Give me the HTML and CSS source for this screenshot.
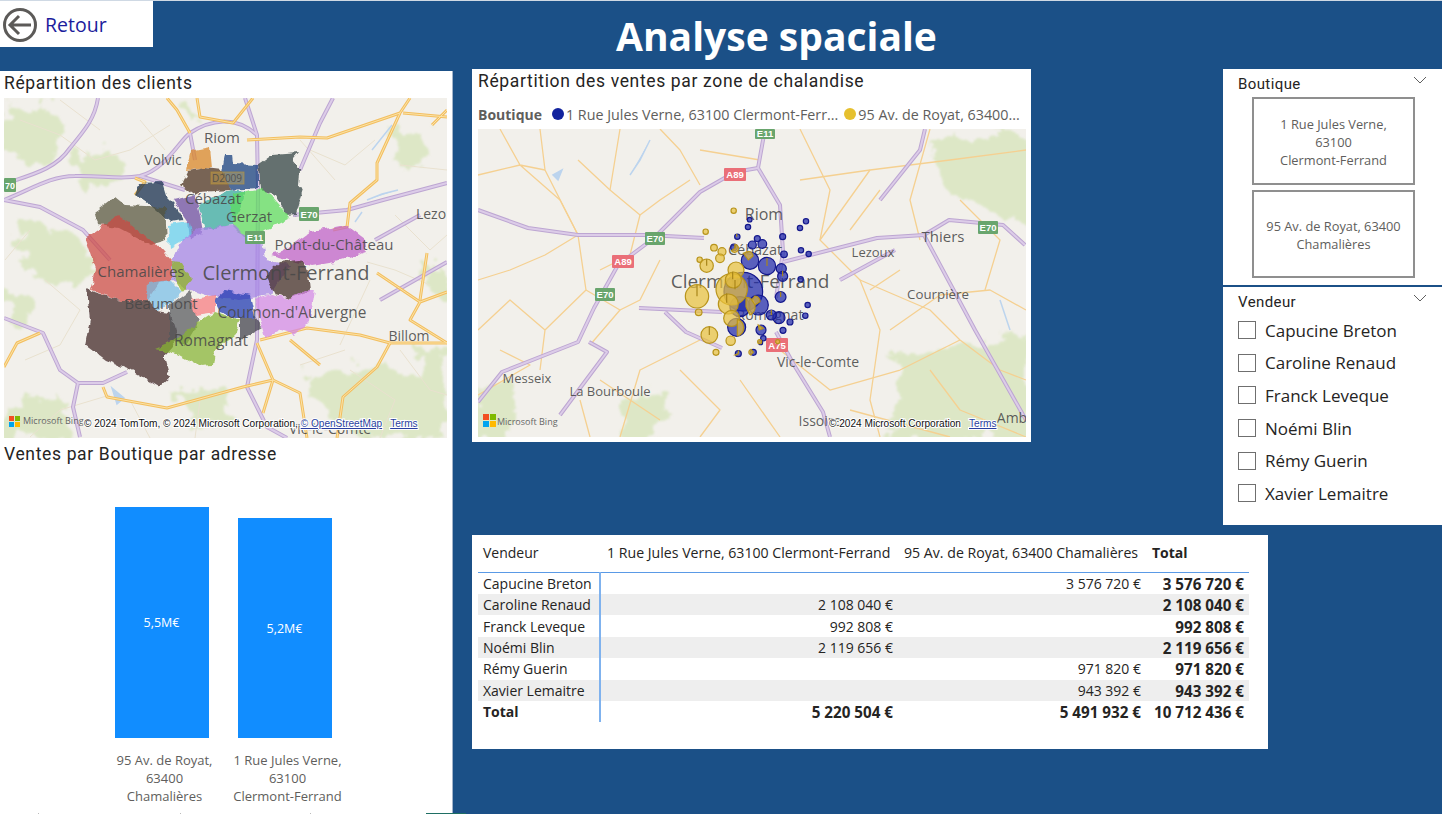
FILE: index.html
```html
<!DOCTYPE html>
<html lang="fr">
<head>
<meta charset="utf-8">
<title>Analyse spaciale</title>
<link rel="stylesheet" href="styles.css">
</head>
<body>
<header class="top">
  <a class="back">
    <svg class="back-ico" viewBox="0 0 34 34"><circle cx="17" cy="17" r="15.5"/><path d="M7 17H28M16 8L7 17L16 26"/></svg>
    <span>Retour</span>
  </a>
  <h1 class="title">Analyse spaciale</h1>
</header>
<main class="main">
  <section class="col-left">
    <h2 class="vis-title">Répartition des clients</h2>
    <svg class="map map-a" viewBox="4 98 443 340">
      <defs>
        <filter id="rough" x="-5%" y="-5%" width="110%" height="110%"><feTurbulence type="fractalNoise" baseFrequency=".11" numOctaves="2" seed="4"/><feDisplacementMap in="SourceGraphic" scale="7" xChannelSelector="R" yChannelSelector="G"/></filter>
        <filter id="woods" x="-5%" y="-5%" width="110%" height="110%"><feTurbulence type="fractalNoise" baseFrequency=".05" numOctaves="4" seed="9"/><feDisplacementMap in="SourceGraphic" scale="34" xChannelSelector="R" yChannelSelector="G"/><feGaussianBlur stdDeviation="1.2"/></filter>
        <g id="a-pur">
          <path d="M4 184C30 175 55 170 70 148C85 130 95 118 98 98"/>
          <path d="M4 200C30 190 50 176 75 176C100 175 120 180 140 176C165 170 180 140 190 133C210 120 235 115 257 135"/>
          <path d="M245 98L257 135L258 190L257 340L247 387L267 427L287 438"/>
          <path d="M293 215L347 210L383 200L447 183"/>
          <path d="M300 170L320 123L333 98"/>
          <path d="M4 200L40 207L83 230L110 260"/>
          <path d="M4 318L43 333L60 370L78 383L103 383L127 372"/>
          <path d="M78 383L73 407L80 437"/>
          <path d="M190 133L195 160M140 176L185 190M380 300L447 262M375 240L420 215"/>
        </g>
        <g id="a-yel">
          <path d="M167 98L177 110L190 133M197 98L200 117L233 123L253 98"/>
          <path d="M247 140L300 137L327 138L400 113L410 98M403 113L447 117"/>
          <path d="M400 113L377 163L377 180L350 203L347 227L333 230"/>
          <path d="M377 273L420 302L410 320L447 343M420 302L447 292M427 253L420 300"/>
          <path d="M260 340L307 328L360 335L390 343L447 343"/>
          <path d="M390 343L377 367L343 397L337 438"/>
          <path d="M103 387L107 397L167 408L243 387L273 380L300 393L307 438"/>
          <path d="M4 367L17 343L40 333M257 343L273 380L263 413"/>
          <path d="M447 110L432 125M290 340L320 365M135 195L145 182L135 178"/>
        </g>
        <g id="a-min">
          <path d="M20 120L60 135L95 160L130 150L170 125M30 230L5 260M45 280L80 310L60 345L25 360M110 395L60 410L30 437"/>
          <path d="M310 150L345 165L375 140M335 180L300 140M400 165L447 170M395 215L430 250L447 235M370 280L340 345M400 350L430 390L447 395M350 370L395 400L380 438"/>
          <path d="M140 120L165 150M100 130L60 100M430 285L395 270L367 262M300 365L345 350M200 400L195 438M130 400L150 438"/>
        </g>
      </defs>
      <rect x="4" y="98" width="443" height="340" class="land"/>
      <g class="soft">
        <path class="wood" filter="url(#woods)" d="M4 105L45 100L65 125L45 165L4 155ZM80 150L115 145L125 180L90 192L76 175ZM18 218L80 238L98 272L72 292L20 268ZM305 375L370 362L447 382V438H345L322 410ZM385 122L424 128L432 160L398 165ZM4 405L60 395L75 437H4ZM178 392L228 385L236 420L190 425ZM416 342L447 356V395L422 380ZM180 105L205 112L195 125ZM420 260L447 270V300L428 290ZM4 290L36 300L30 330L4 325Z"/>
        <use href="#a-min" class="r-min"/>
        <path class="water" d="M367 200L382 194L398 190M355 222L362 212M372 150L392 125M112 388L124 398L117 404Z"/>
        <use href="#a-pur" class="r-pur-o"/><use href="#a-pur" class="r-pur-i"/>
        <use href="#a-yel" class="r-yel-o"/><use href="#a-yel" class="r-yel-i"/>
      </g>
      <g class="zones" filter="url(#rough)">
        <path fill="#d98420" d="M186 171L190 152L210 148L212 168L198 169Z"/>
        <path fill="#123a7c" d="M225 155L232 155L233 164L258 165L258 188L230 190L222 172Z"/>
        <path fill="#2e3e3e" d="M258 165L272 155L298 153L292 160L300 170L299 187L303 188L295 215L287 216L275 195L260 190Z"/>
        <path fill="#4a2d1f" d="M181 185L188 171L205 168L222 170L230 190L200 192L195 195Z"/>
        <path fill="#0b2a4a" d="M135 195L140 183L163 182L168 198L175 205L184 220L170 222L150 205Z"/>
        <path fill="#6a49a0" d="M173 200L195 195L200 215L203 232L190 240L188 222Z"/>
        <path fill="#35a89e" d="M198 205L230 190L245 192L232 225L205 230Z"/>
        <path fill="#5bdc5c" d="M232 195L262 189L270 195L290 218L270 228L245 238L232 225Z"/>
        <path fill="#55533c" d="M95 212L115 197L125 205L165 207L167 240L150 245L118 228L98 225Z"/>
        <path fill="#cc4a42" d="M85 238L118 215L155 243L172 262L172 280L160 282L148 300L120 300L90 290L96 270Z"/>
        <path fill="#63d0f0" d="M168 225L190 222L192 235L170 248Z"/>
        <path fill="#a482e6" d="M182 240L200 228L235 225L250 240L262 240L265 260L290 265L270 295L240 300L205 295L190 290L172 280L172 262Z"/>
        <path fill="#bf5ec8" d="M282 252L310 232L345 225L365 240L367 252L335 262L312 266L270 255Z"/>
        <path fill="#3e2a22" d="M265 275L280 262L300 260L308 272L310 292L290 299L275 295Z"/>
        <path fill="#d488e6" d="M255 300L270 295L290 299L305 290L315 290L310 320L295 335L280 330L265 338L260 320Z"/>
        <path fill="#8db420" d="M172 262L182 263L192 280L182 292L175 280Z"/>
        <path fill="#78bee6" d="M148 283L170 280L182 292L170 305L155 310L147 298Z"/>
        <path fill="#3e2426" d="M87 290L120 300L148 300L155 310L170 312L178 340L165 355L165 360L170 378L160 387L130 370L105 360L85 345L90 320Z"/>
        <path fill="#55585c" d="M170 305L190 290L195 315L200 320L185 345L170 340Z"/>
        <path fill="#f77a80" d="M190 300L215 295L215 312L195 315Z"/>
        <path fill="#1c38b0" d="M214 300L225 290L250 295L255 318L235 318L220 312Z"/>
        <path fill="#3e3e48" d="M240 318L255 318L262 328L250 335L240 340Z"/>
        <path fill="#86b430" d="M155 348L175 340L200 322L215 312L240 320L235 335L215 350L213 365L200 366L180 355Z"/>
      </g>
      <g class="sign green"><rect x="299" y="207" width="20" height="14"/><text x="309" y="218">E70</text></g>
      <g class="sign green"><rect x="245" y="231" width="20" height="13"/><text x="255" y="241">E11</text></g>
      <g class="sign green"><rect x="4" y="178" width="12" height="14"/><text x="10" y="189" class="s-small">70</text></g>
      <rect x="211" y="172" width="33" height="12" class="road-tag"/>
      <g class="place">
        <text x="222" y="143" class="p15">Riom</text>
        <text x="163" y="165" class="p14">Volvic</text>
        <text x="227" y="182" class="p10">D2009</text>
        <text x="213" y="204" class="p15">Cébazat</text>
        <text x="249" y="222" class="p15">Gerzat</text>
        <text x="431" y="219" class="p14">Lezo</text>
        <text x="334" y="250" class="p15">Pont-du-Château</text>
        <text x="141" y="277" class="p15">Chamalières</text>
        <text x="286" y="280" class="p20">Clermont-Ferrand</text>
        <text x="161" y="309" class="p15">Beaumont</text>
        <text x="292" y="318" class="p154">Cournon-d'Auvergne</text>
        <text x="409" y="341" class="p14">Billom</text>
        <text x="211" y="346" class="p155">Romagnat</text>
        <text x="330" y="434" class="p14">Vic-le-Comte</text>
      </g>
      <g class="ms"><rect x="9" y="416" width="5" height="5" fill="#f25022"/><rect x="15" y="416" width="5" height="5" fill="#7fba00"/><rect x="9" y="422" width="5" height="5" fill="#00a4ef"/><rect x="15" y="422" width="5" height="5" fill="#ffb900"/><text x="23" y="424" class="bing">Microsoft Bing</text></g>
      <text x="84" y="427" class="copy">© 2024 TomTom, © 2024 Microsoft Corporation, <tspan class="lnk">© OpenStreetMap</tspan><tspan dx="8" class="lnk">Terms</tspan></text>
    </svg>
    <h2 class="vis-title vis-title-b">Ventes par Boutique par adresse</h2>
    <div class="bars">
      <div class="bar-col">
        <div class="bar bar-a">5,5M€</div>
        <div class="bar-lab">95 Av. de Royat,<br>63400<br>Chamalières</div>
      </div>
      <div class="bar-col">
        <div class="bar bar-b">5,2M€</div>
        <div class="bar-lab">1 Rue Jules Verne,<br>63100<br>Clermont-Ferrand</div>
      </div>
    </div>
  </section>
  <section class="col-mid">
    <div class="panel-map">
      <h2 class="vis-title">Répartition des ventes par zone de chalandise</h2>
      <div class="legend">
        <b>Boutique</b>
        <i class="dot navy"></i><span class="lg-1">1 Rue Jules Verne, 63100 Clermont-Ferr...</span>
        <i class="dot gold"></i><span class="lg-2">95 Av. de Royat, 63400...</span>
      </div>
      <svg class="map map-b" viewBox="478 129 548 308">
        <defs>
          <g id="b-pur">
            <path d="M478 402L502 372L578 342L594 308L618 265L654 238L700 192L735 172L758 168L780 205L783 252L776 298"/>
            <path d="M478 210L528 228L578 235L647 235L704 238"/>
            <path d="M765 129L758 168M783 262L877 238L924 235L949 220L1003 225L1025 245"/>
            <path d="M639 308L722 312M665 312L686 332L722 348"/>
            <path d="M776 332L794 365L823 412L830 437"/>
            <path d="M589 342L607 352L560 415M924 235L975 330L1026 420M880 200L920 150L925 129M895 250L840 280"/>
          </g>
          <g id="b-yel">
            <path d="M478 280L510 270L545 255L578 235M540 129L545 170L578 235L586 290L545 330L540 370"/>
            <path d="M586 290L620 310L590 345M620 129L610 190L640 215L660 200L690 180M660 129L680 150L700 185"/>
            <path d="M800 129L830 190L820 240L860 280L880 330L870 400L880 437"/>
            <path d="M860 280L930 310L960 340L1000 370L1026 380M930 129L910 200L920 240"/>
            <path d="M820 240L870 170L950 160L1026 150M700 340L640 370L620 437"/>
            <path d="M780 350L830 390L900 370L960 340M600 380L660 420M890 330L940 295L990 290L1026 310"/>
            <path d="M478 175L520 165L545 170M500 129L520 165L560 200L578 235M478 330L510 300L545 330M680 370L720 410L700 437"/>
            <path d="M578 160L610 190M640 215L630 255L600 270M660 260L640 300L620 310M700 150L760 160M800 180L870 170M880 190L850 230"/>
            <path d="M900 270L870 290M960 200L1000 240L985 290M500 350L530 365L478 395M580 400L590 437M740 380L780 437M850 410L950 437M930 370L960 410L1026 437"/>
          </g>
        </defs>
        <rect x="478" y="129" width="548" height="308" class="land"/>
        <g class="soft">
          <path class="wood" filter="url(#woods)" d="M930 140L1000 135H1030V225L985 212L950 190L935 170ZM895 355L950 350L1030 335V440H885L900 400ZM475 390L505 380L515 440H475ZM625 400L668 390L660 440H625Z"/>
          <path class="water" d="M553 175L562 170L558 180ZM650 140L640 160L630 175M1000 300L1010 330"/>
          <use href="#b-yel" class="r-yel-t"/>
          <use href="#b-pur" class="r-pur-o"/><use href="#b-pur" class="r-pur-i"/>
        </g>
        <g class="sign green"><rect x="755" y="129" width="20" height="10"/><text x="765" y="137">E11</text></g>
        <g class="sign red"><rect x="724" y="168" width="22" height="13"/><text x="735" y="178">A89</text></g>
        <g class="sign green"><rect x="645" y="232" width="20" height="13"/><text x="655" y="242">E70</text></g>
        <g class="sign red"><rect x="612" y="255" width="22" height="13"/><text x="623" y="265">A89</text></g>
        <g class="sign green"><rect x="595" y="288" width="20" height="13"/><text x="605" y="298">E70</text></g>
        <g class="sign red"><rect x="766" y="338" width="22" height="14"/><text x="777" y="349">A75</text></g>
        <g class="sign green"><rect x="978" y="221" width="20" height="13"/><text x="988" y="231">E70</text></g>
        <g class="place">
          <text x="764" y="220" class="p16">Riom</text>
          <text x="755" y="255" class="p145">Cébazat</text>
          <text x="750" y="288" class="p19">Clermont-Ferrand</text>
          <text x="873" y="257" class="p13">Lezoux</text>
          <text x="943" y="242" class="p15">Thiers</text>
          <text x="938" y="299" class="p133">Courpière</text>
          <text x="818" y="367" class="p14">Vic-le-Comte</text>
          <text x="527" y="383" class="p13">Messeix</text>
          <text x="610" y="396" class="p13">La Bourboule</text>
          <text x="820" y="426" class="p14">Issoire</text>
          <text x="1012" y="423" class="p14">Amb</text>
          <text x="770" y="320" class="p14">Romagnat</text>
        </g>
        <g transform="translate(660 190) scale(.3333)">
          <g class="bb">
            <circle cx="250" cy="305" r="58"/><circle cx="295" cy="345" r="30"/><circle cx="240" cy="350" r="30"/>
            <circle cx="270" cy="212" r="26"/><circle cx="321" cy="228" r="26"/><circle cx="230" cy="412" r="27"/>
            <circle cx="269" cy="89" r="7"/><circle cx="264" cy="111" r="8"/><circle cx="368" cy="140" r="9"/><circle cx="420" cy="114" r="8"/><circle cx="438" cy="94" r="8"/><circle cx="423" cy="181" r="8"/><circle cx="446" cy="192" r="8"/><circle cx="372" cy="193" r="10"/><circle cx="292" cy="146" r="9"/><circle cx="307" cy="162" r="13"/><circle cx="277" cy="165" r="12"/><circle cx="222" cy="172" r="10"/><circle cx="364" cy="236" r="15"/><circle cx="368" cy="259" r="15"/><circle cx="422" cy="268" r="8"/><circle cx="362" cy="321" r="16"/><circle cx="443" cy="345" r="8"/><circle cx="436" cy="377" r="8"/><circle cx="390" cy="396" r="9"/><circle cx="357" cy="383" r="18"/><circle cx="334" cy="375" r="15"/><circle cx="369" cy="421" r="9"/><circle cx="303" cy="420" r="15"/><circle cx="310" cy="445" r="8"/><circle cx="280" cy="487" r="9"/><circle cx="232" cy="140" r="8"/><circle cx="302" cy="458" r="6"/><circle cx="235" cy="491" r="9"/>
          </g>
          <g class="by">
            <circle cx="221" cy="62" r="8"/><circle cx="137" cy="125" r="8"/><circle cx="162" cy="173" r="10"/><circle cx="186" cy="185" r="12"/><circle cx="180" cy="205" r="13"/><circle cx="119" cy="209" r="8"/><circle cx="140" cy="227" r="20"/><circle cx="111" cy="319" r="35"/><circle cx="116" cy="367" r="10"/><circle cx="148" cy="435" r="25"/><circle cx="168" cy="487" r="9"/><circle cx="212" cy="452" r="14"/><circle cx="299" cy="455" r="6"/><circle cx="353" cy="455" r="6"/>
            <path d="M225 163A12 12 0 1 1 214 182L225 175Z"/>
            <path d="M265 184A14 14 0 0 1 279 198L265 210L250 190Z"/>
            <circle cx="228" cy="240" r="24"/>
            <circle cx="215" cy="298" r="47"/>
            <circle cx="220" cy="270" r="24"/>
            <circle cx="205" cy="342" r="30"/>
            <circle cx="215" cy="385" r="24"/>
            <path d="M258 322A28 28 0 0 1 270 375L258 350Z"/>
            <path d="M285 318A16 16 0 0 1 300 335L285 345L275 330Z"/>
            <path d="M232 388A26 26 0 0 1 232 438Z"/>
            <path d="M295 405L310 415L298 420Z"/>
            <path d="M273 478L280 487L272 495A9 9 0 0 1 273 478Z"/>
            <path d="M235 482A9 9 0 0 1 225 495L235 491Z"/>
          </g>
          <g class="wedge">
            <path d="M111 319V285M140 227V208M148 435V410M321 228V204M368 259V242M362 321V305M230 140V132M225 175V165M200 338V310M225 298V270M218 268V245M334 375V360"/>
          </g>
        </g>
        <g class="ms"><rect x="483" y="414" width="6" height="6" fill="#f25022"/><rect x="490" y="414" width="6" height="6" fill="#7fba00"/><rect x="483" y="421" width="6" height="6" fill="#00a4ef"/><rect x="490" y="421" width="6" height="6" fill="#ffb900"/><text x="497" y="425" class="bing">Microsoft Bing</text></g>
        <text x="829" y="427" class="copy">© 2024 Microsoft Corporation<tspan dx="8" class="lnk">Terms</tspan></text>
      </svg>
    </div>
    <div class="panel-table">
      <table class="matrix">
        <colgroup><col class="c1"><col class="c2"><col class="c3"><col class="c4"></colgroup>
        <thead>
          <tr><th>Vendeur</th><th>1 Rue Jules Verne, 63100 Clermont-Ferrand</th><th>95 Av. de Royat, 63400 Chamalières</th><th class="tot">Total</th></tr>
        </thead>
        <tbody>
          <tr><td>Capucine Breton</td><td></td><td>3 576 720 €</td><td>3 576 720 €</td></tr>
          <tr><td>Caroline Renaud</td><td>2 108 040 €</td><td></td><td>2 108 040 €</td></tr>
          <tr><td>Franck Leveque</td><td>992 808 €</td><td></td><td>992 808 €</td></tr>
          <tr><td>Noémi Blin</td><td>2 119 656 €</td><td></td><td>2 119 656 €</td></tr>
          <tr><td>Rémy Guerin</td><td></td><td>971 820 €</td><td>971 820 €</td></tr>
          <tr><td>Xavier Lemaitre</td><td></td><td>943 392 €</td><td>943 392 €</td></tr>
        </tbody>
        <tfoot>
          <tr><td>Total</td><td>5 220 504 €</td><td>5 491 932 €</td><td>10 712 436 €</td></tr>
        </tfoot>
      </table>
    </div>
  </section>
  <aside class="col-right">
    <div class="slicer slicer-shop">
      <div class="sl-head"><span>Boutique</span><svg class="chev" viewBox="0 0 14 8"><path d="M1 1L7 7L13 1"/></svg></div>
      <div class="tile tile-a">1 Rue Jules Verne,<br>63100<br>Clermont-Ferrand</div>
      <div class="tile tile-b">95 Av. de Royat, 63400<br>Chamalières</div>
    </div>
    <div class="slicer slicer-seller">
      <div class="sl-head"><span>Vendeur</span><svg class="chev" viewBox="0 0 14 8"><path d="M1 1L7 7L13 1"/></svg></div>
      <ul class="checks">
        <li><i class="box"></i>Capucine Breton</li>
        <li><i class="box"></i>Caroline Renaud</li>
        <li><i class="box"></i>Franck Leveque</li>
        <li><i class="box"></i>Noémi Blin</li>
        <li><i class="box"></i>Rémy Guerin</li>
        <li><i class="box"></i>Xavier Lemaitre</li>
      </ul>
    </div>
  </aside>
</main>
<div class="edge-mark"></div>
<div class="edge-ticks"></div>
</body>
</html>
```

FILE: styles.css
```css
* { box-sizing: border-box; }
html, body { margin: 0; height: 100%; }
body {
  position: relative;
  width: 1442px;
  height: 814px;
  overflow: hidden;
  background: #1b5087;
  font-family: "Open Sans", "Noto Sans", sans-serif;
  color: #252423;
}
.top { display: flex; height: 69px; border-top: 1px solid #cfd9e4; }
.back {
  display: flex;
  align-items: center;
  gap: 8px;
  width: 153px;
  height: 46px;
  padding: 1px 0 0 3px;
  background: #fff;
  color: #1c1c9c;
  font-size: 19.5px;
}
.back-ico { width: 34px; height: 34px; fill: none; stroke: #5c5a58; stroke-width: 3; }
.title {
  flex: 1;
  margin: 6px 0 0;
  padding-right: 42px;
  text-align: center;
  color: #fff;
  font-size: 39px;
  line-height: 58px;
  font-weight: 700;
}
.main { display: flex; height: 745px; }
.col-left {
  flex: none;
  width: 453px;
  margin-top: 2px;
  padding-left: 4px;
  background: #fff;
  border-right: 1px solid #a3b4ca;
}
.vis-title {
  margin: 0;
  height: 27px;
  font-family: Roboto, "Open Sans", sans-serif;
  font-size: 17.5px;
  line-height: 24px;
  font-weight: 400;
  letter-spacing: .65px;
  color: #252423;
}
.vis-title-b { height: 52px; margin-top: 4px; }
.map { display: block; }
.map-a { width: 443px; height: 340px; }
.map-b { width: 548px; height: 308px; }
.land { fill: #f2f0eb; }
.soft { filter: blur(.4px); }
.wood { fill: #dde7c6; }
.water { fill: #bcd4ee; stroke: #bcd4ee; stroke-width: 1.5; }
.r-pur-o, .r-pur-i, .r-yel-o, .r-yel-i, .r-yel-t, .r-min { fill: none; stroke-linejoin: round; }
.r-min { stroke: #e9e1cf; stroke-width: 1; }
.r-pur-o { stroke: #bda6d2; stroke-width: 4; }
.r-pur-i { stroke: #dccce8; stroke-width: 2; }
.r-yel-o { stroke: #f3bf60; stroke-width: 3; }
.r-yel-i { stroke: #fbe3a8; stroke-width: 1; }
.r-yel-t { stroke: #f5d091; stroke-width: 1.3; }
.zones path { opacity: .72; }
.road-tag { fill: rgba(226, 180, 70, .35); stroke: rgba(190, 150, 50, .6); stroke-width: 1; }
.sign rect { rx: 1px; }
.sign text { font: 700 9.5px "Liberation Sans", sans-serif; fill: #fff; text-anchor: middle; }
.sign .s-small { font-size: 9px; }
.green rect { fill: #69a56d; }
.red rect { fill: #ea6f78; }
.place text {
  fill: #484848;
  fill-opacity: .88;
  text-anchor: middle;
  font-family: "Open Sans", sans-serif;
}
.place .p10 { font-size: 10px; }
.place .p13 { font-size: 13px; }
.place .p133 { font-size: 13.3px; }
.place .p14 { font-size: 14px; }
.place .p145 { font-size: 14.5px; }
.place .p15 { font-size: 15px; }
.place .p154 { font-size: 15.4px; }
.place .p155 { font-size: 15.5px; }
.place .p16 { font-size: 16px; }
.place .p19 { font-size: 19px; }
.place .p20 { font-size: 20px; }
.bing { font: 9px "Open Sans", sans-serif; fill: #666; }
.copy { font: 10.1px "Liberation Sans", sans-serif; fill: #111; stroke: #fff; stroke-width: 2px; paint-order: stroke; }
.lnk { fill: #2a3fa0; text-decoration: underline; }
.bb circle { fill: rgba(30, 40, 170, .72); stroke: #14188c; stroke-width: 3.6; }
.by circle, .by path { fill: rgba(232, 192, 60, .7); stroke: #b8941c; stroke-width: 3.6; }
.wedge path { fill: none; stroke: #a8851a; stroke-width: 3.6; }
.bars {
  display: flex;
  height: 311px;
  padding-left: 96px;
  align-items: flex-end;
}
.bar-col { width: 123px; display: flex; flex-direction: column; align-items: center; }
.bar {
  width: 94px;
  display: flex;
  align-items: center;
  justify-content: center;
  background: #118dff;
  color: #fff;
  font-size: 12.5px;
}
.bar-a { height: 231px; }
.bar-b { height: 220px; }
.bar-lab {
  width: 116px;
  margin: 13px 0 0 6px;
  height: 54px;
  text-align: center;
  font-size: 13px;
  line-height: 18px;
  color: #605e5c;
  white-space: nowrap;
}
.col-mid { flex: none; width: 751px; margin-left: 19px; }
.panel-map {
  width: 559px;
  height: 373px;
  padding: 0 6px;
  background: #fff;
}
.panel-map .vis-title { height: 34px; }
.legend {
  display: flex;
  align-items: center;
  height: 22px;
  margin-bottom: 4px;
  font-size: 14.3px;
  color: #605e5c;
  white-space: nowrap;
}
.legend b { margin-right: 10px; font-size: 14px; }
.dot { width: 12px; height: 12px; border-radius: 50%; margin-right: 2px; }
.navy { background: #12239e; }
.gold { background: #e6c02e; margin-left: 6px; }
.panel-table {
  width: 796px;
  height: 214px;
  margin-top: 93px;
  padding: 6px 19px 0 6px;
  background: #fff;
}
.matrix {
  border-collapse: collapse;
  table-layout: fixed;
  width: 771px;
  font-size: 14px;
  color: #252423;
}
.c1 { width: 122px; }
.c2 { width: 297px; }
.c3 { width: 248px; }
.c4 { width: 104px; }
.matrix th {
  height: 31px;
  padding: 0 3px 8px 7px;
  font-size: 14.15px;
  font-weight: 400;
  text-align: left;
  white-space: nowrap;
  border-bottom: 1px solid #5a9ae6;
}
.matrix th:first-child { padding-left: 5px; font-size: 14px; }
.matrix th.tot { font-weight: 700; padding-left: 7px; font-size: 14px; }
.matrix td {
  height: 21.4px;
  padding: 1px 4px 0 5px;
  text-align: right;
  white-space: nowrap;
  line-height: 20px;
}
.matrix tbody tr:first-child td { height: 22px; }
.matrix td:first-child {
  text-align: left;
  border-right: 2px solid #7fb2ee;
}
.matrix td:last-child { padding-right: 5px; font-size: 15.2px; font-weight: 700; }
.matrix tfoot td { font-weight: 700; }
.matrix tfoot td:nth-child(2), .matrix tfoot td:nth-child(3) { font-size: 15.2px; }
.matrix tbody tr:nth-child(even) { background: #eeeeee; }
.col-right { flex: none; width: 219px; }
.slicer { background: #fff; padding: 0 15px; }
.slicer-shop { height: 216px; }
.slicer-seller { height: 238px; margin-top: 2px; }
.sl-head {
  display: flex;
  justify-content: space-between;
  height: 28px;
  padding-top: 6px;
  font-family: Roboto, "Open Sans", sans-serif;
  font-size: 15px;
  letter-spacing: .4px;
  line-height: 19px;
}
.chev { width: 14px; height: 8px; margin-top: 1px; fill: none; stroke: #5f5f5f; stroke-width: 1; }
.tile {
  display: flex;
  align-items: center;
  justify-content: center;
  width: 163px;
  height: 88px;
  margin-left: 14px;
  padding: 2px 5px 0;
  text-align: center;
  font-size: 12.8px;
  line-height: 18px;
  color: #605e5c;
  border: 2px solid #8f8f8f;
  white-space: nowrap;
}
.tile-b { margin-top: 5px; }
.checks { margin: -1px 0 0; padding: 0; list-style: none; }
.checks li {
  display: flex;
  align-items: center;
  gap: 9px;
  height: 32.6px;
  font-size: 17px;
  color: #252423;
}
.box { width: 18px; height: 18px; border: 1px solid #6f6f6f; background: #fff; }
.edge-mark {
  position: absolute;
  left: 426px;
  bottom: 0;
  width: 40px;
  height: 1px;
  background: #1f6f64;
}
.edge-ticks {
  position: absolute;
  left: 38px;
  bottom: 0;
  width: 1px;
  height: 1px;
  background: #bbb;
  box-shadow: 142px 0 #bbb, 272px 0 #bbb;
}
```
